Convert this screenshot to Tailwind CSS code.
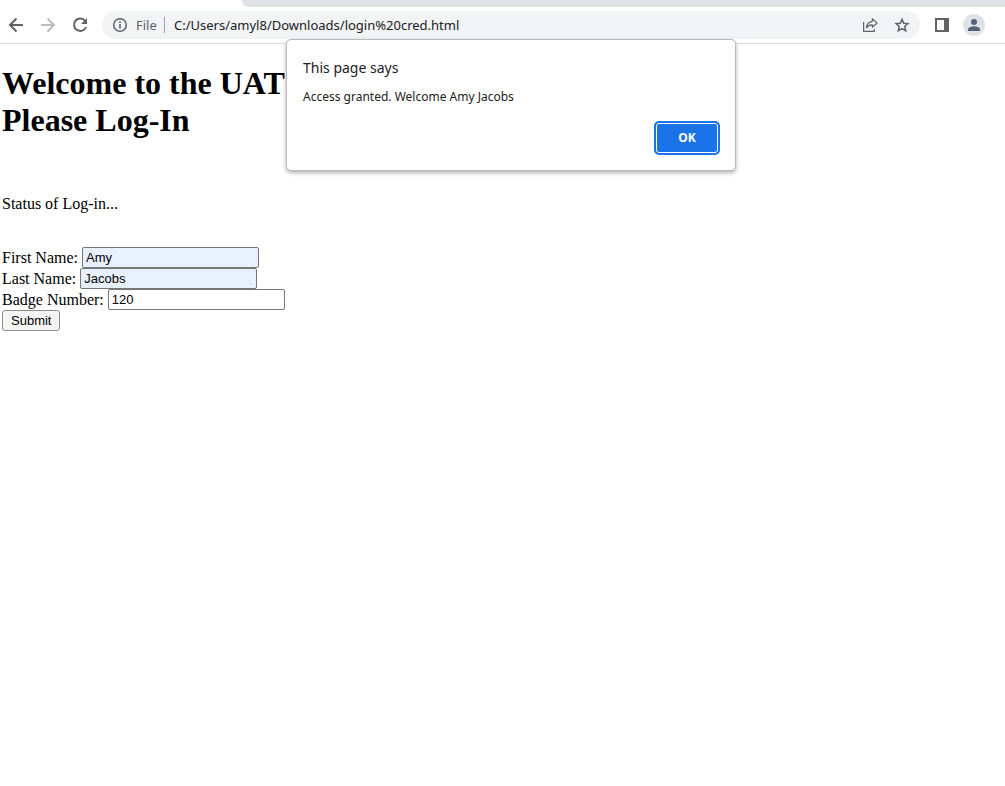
<!DOCTYPE html>
<html lang="en">
<head>
<meta charset="utf-8">
<meta name="viewport" content="width=device-width, initial-scale=1">
<title>login cred</title>
<script src="https://cdn.jsdelivr.net/npm/@tailwindcss/browser@4"></script>
</head>
<body class="relative min-h-screen bg-white font-['Liberation_Serif',serif] text-base text-black">

<header class="font-['Noto_Sans',sans-serif]">
  <!-- Tab strip -->
  <div class="flex h-[7px] bg-white">
    <div class="w-[242px]"></div>
    <div class="flex-1 rounded-bl-[7px] bg-[#dee1e6]"></div>
  </div>
  <!-- Toolbar -->
  <nav class="flex h-[37px] items-center border-b border-[#dadce0] text-[#5f6368]">
    <div class="flex w-[102px] items-center gap-3 pl-[6px]">
      <button type="button" aria-label="Back" class="size-5">
        <svg viewBox="0 0 20 20" class="size-5" fill="none" stroke="currentColor" stroke-width="2"><path d="M17 10H4M10.5 3.5L4 10l6.500 6.500"/></svg>
      </button>
      <button type="button" aria-label="Forward" class="size-5 text-[#babcbe]">
        <svg viewBox="0 0 20 20" class="size-5" fill="none" stroke="currentColor" stroke-width="2"><path d="M3 10h13M9.500 3.500L16 10l-6.500 6.500"/></svg>
      </button>
      <button type="button" aria-label="Reload" class="size-5">
        <svg viewBox="0 0 20 20" class="size-5" fill="none" stroke="currentColor" stroke-width="2"><path d="M15.200 6A6.200 6.200 0 1 0 16 12"/><path d="M17 3v6h-6z" fill="currentColor" stroke="none"/></svg>
      </button>
    </div>
    <div class="flex h-7 flex-1 items-center rounded-full bg-[#f1f3f4] pr-2 pl-2.5">
      <svg viewBox="0 0 16 16" class="size-4 shrink-0" fill="none" stroke="currentColor"><circle cx="8" cy="8" r="6.300" stroke-width="1.500"/><path d="M8 7v4.500M8 4.300V6" stroke-width="1.600"/></svg>
      <span class="w-9 pl-2 text-[13px] leading-5">File</span>
      <span class="h-4 w-px bg-[#9aa0a6]"></span>
      <input type="text" aria-label="Address" value="C:/Users/amyl8/Downloads/login%20cred.html" class="min-w-0 flex-1 bg-transparent pl-[9px] text-[13px] leading-5 text-[#202124] outline-none">
      <button type="button" aria-label="Share" class="mr-4 size-4">
        <svg viewBox="0 0 16 16" class="size-4" fill="none" stroke="currentColor" stroke-width="1.200"><path d="M1.600 5v9.400h10.800V12"/><path d="M10.300 1.800l4.800 4.200-4.800 4.200V7.800C7.600 7.600 5.800 8.500 4.300 10.800 4.700 7.200 6.700 4.800 10.300 4.300z" stroke-linejoin="round"/></svg>
      </button>
      <button type="button" aria-label="Bookmark" class="mr-0.5 size-4">
        <svg viewBox="0 0 16 16" class="size-4" fill="none" stroke="currentColor" stroke-width="1.500"><path d="M8 2.400l1.700 3.900 4.200.4-3.200 2.800 1 4.200L8 11.500l-3.700 2.200 1-4.200-3.200-2.800 4.200-.4z"/></svg>
      </button>
    </div>
    <div class="flex items-center gap-3.5 pr-5 pl-[15px]">
      <button type="button" aria-label="Side panel" class="h-3.5 w-3.5">
        <svg viewBox="0 0 14 14" class="size-3.5"><path fill="currentColor" fill-rule="evenodd" d="M0 0h14v14H0zM2 2v10h7V2z"/></svg>
      </button>
      <button type="button" aria-label="Profile" class="size-[22px]">
        <svg viewBox="0 0 22 22" class="size-[22px]"><circle cx="11" cy="11" r="11" fill="#dee1e6"/><g fill="#56627a"><circle cx="11" cy="8" r="3"/><path d="M5 17v-1.500C5 13.300 9 12.300 11 12.300s6 1 6 3.200V17z"/></g></svg>
      </button>
    </div>
  </nav>
</header>

<main class="px-0.5 pt-[21px]">
  <h1 class="text-[32px] leading-[37px] font-bold">Welcome to the UAT<br>Please Log-In</h1>
  <p class="pt-14 leading-[18px]">Status of Log-in...</p>
  <form class="pt-[34px]" onsubmit="return false">
    <div class="flex h-[21px] items-center gap-1">
      <label for="first" class="leading-5">First Name:</label>
      <input id="first" type="text" value="Amy" class="h-[21px] w-[177px] rounded-xs border border-[#767676] bg-[#e8f0fe] px-[3px] font-['Liberation_Sans',sans-serif] text-[13px]">
    </div>
    <div class="flex h-[21px] items-center gap-1">
      <label for="last" class="leading-5">Last Name:</label>
      <input id="last" type="text" value="Jacobs" class="h-[21px] w-[177px] rounded-xs border border-[#767676] bg-[#e8f0fe] px-[3px] font-['Liberation_Sans',sans-serif] text-[13px]">
    </div>
    <div class="flex h-[21px] items-center gap-1">
      <label for="badge" class="leading-5">Badge Number:</label>
      <input id="badge" type="text" value="120" class="h-[21px] w-[177px] rounded-xs border border-[#767676] bg-white px-[3px] font-['Liberation_Sans',sans-serif] text-[13px]">
    </div>
    <button type="submit" class="block h-[21px] rounded-[3px] border border-[#8c8c8c] bg-[#f5f5f5] px-2 font-['Liberation_Sans',sans-serif] text-[13px] leading-[19px]">Submit</button>
  </form>
</main>

<!-- Alert dialog -->
<div role="alertdialog" aria-labelledby="alert-title" aria-describedby="alert-text" class="absolute top-[39px] left-[286px] flex w-[450px] flex-col rounded-[5px] border border-[#b8babd] bg-white px-4 pt-4 pb-[15px] font-['Noto_Sans',sans-serif] text-[#202124] shadow-[0_2px_4px_rgba(0,0,0,0.3)]">
  <h2 id="alert-title" class="text-[14px] leading-6">This page says</h2>
  <p id="alert-text" class="pt-2 text-[12px] leading-[18px]">Access granted. Welcome Amy Jacobs</p>
  <button type="button" class="mt-[15px] -mr-px h-[34px] w-[66px] self-end rounded-[5px] border-2 border-[#1a73e8] bg-[#1a73e8] text-[12px] leading-4 font-bold text-white inset-ring inset-ring-white">OK</button>
</div>
</body>
</html>
